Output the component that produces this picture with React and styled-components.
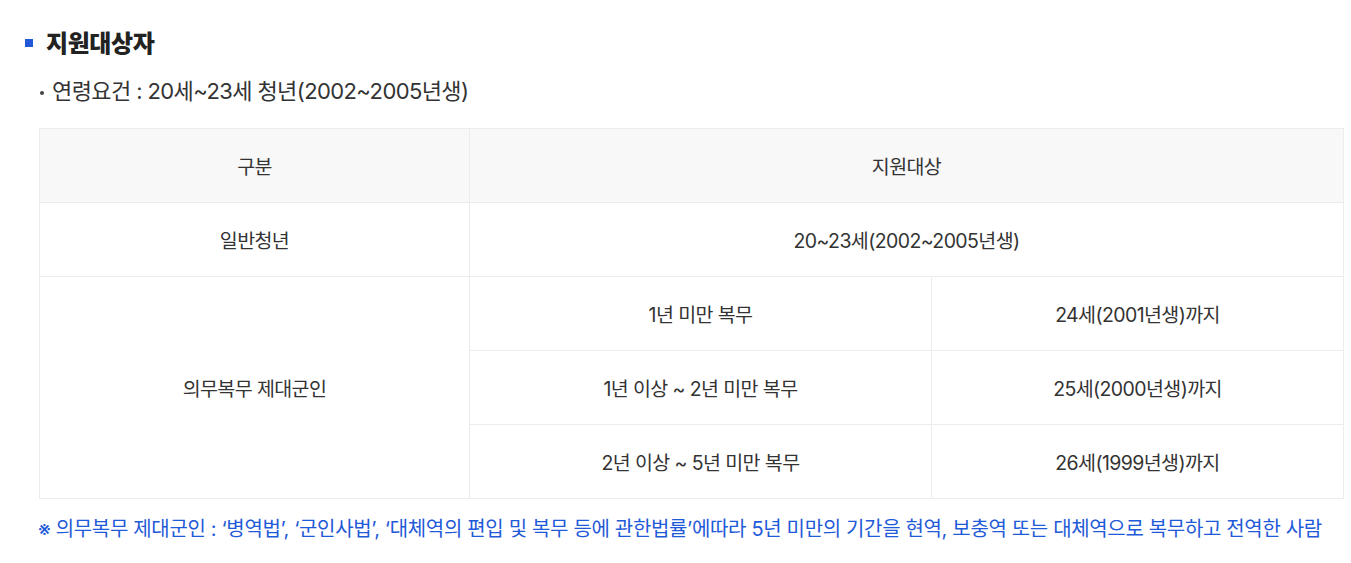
import React from "react";
import styled, { createGlobalStyle } from "styled-components";

const GlobalStyle = createGlobalStyle`
  body {
    margin: 0;
    background: #fff;
    font-family: Inter, "Noto Sans CJK KR", sans-serif;
    color: #333;
  }
`;

const rows = [
  { period: "1년 미만 복무", age: "24세(2001년생)까지" },
  { period: "1년 이상 ~ 2년 미만 복무", age: "25세(2000년생)까지" },
  { period: "2년 이상 ~ 5년 미만 복무", age: "26세(1999년생)까지" },
];

const App = () => {
  return (
    <Page>
      <GlobalStyle />
      <Heading>지원대상자</Heading>
      <Bullet>연령요건 : 20세~23세 청년(2002~2005년생)</Bullet>
      <Table>
        <colgroup>
          <col style={{ width: 430 }} />
          <col style={{ width: 462 }} />
          <col style={{ width: 412 }} />
        </colgroup>
        <thead>
          <tr>
            <Th>구분</Th>
            <Th colSpan={2}>지원대상</Th>
          </tr>
        </thead>
        <tbody>
          <tr>
            <Td>일반청년</Td>
            <Td colSpan={2}>20~23세(2002~2005년생)</Td>
          </tr>
          {rows.map((row, i) => (
            <tr key={row.period}>
              {i === 0 && <Td rowSpan={3}>의무복무 제대군인</Td>}
              <Td>{row.period}</Td>
              <Td>{row.age}</Td>
            </tr>
          ))}
        </tbody>
      </Table>
      <Note>
        ※ 의무복무 제대군인 : ‘병역법’, ‘군인사법’, ‘대체역의 편입 및 복무 등에
        관한법률’에따라 5년 미만의 기간을 현역, 보충역 또는 대체역으로 복무하고
        전역한 사람
      </Note>
    </Page>
  );
};

const Page = styled.div`
  padding: 28px 8px 0 39px;
`;

const Heading = styled.h3`
  position: relative;
  margin: 0 0 0 7px;
  font-size: 24px;
  font-weight: 800;
  color: #222;
  letter-spacing: -0.4px;
  line-height: 32px;
  &::before {
    content: "";
    position: absolute;
    left: -21px;
    top: 11px;
    width: 8px;
    height: 8px;
    background: #2258d8;
  }
`;

const Bullet = styled.p`
  position: relative;
  margin: 16px 0 0 13px;
  font-size: 22px;
  line-height: 30px;
  color: #333;
  letter-spacing: -0.6px;
  &::before {
    content: "";
    position: absolute;
    left: -12px;
    top: 15px;
    width: 4px;
    height: 4px;
    border-radius: 50%;
    background: #444;
  }
`;

const Table = styled.table`
  margin-top: 22px;
  width: 1305px;
  border-collapse: collapse;
  table-layout: fixed;
`;

const Th = styled.th`
  height: 73px;
  padding: 0;
  background: #f8f8f8;
  border: 1px solid #ececec;
  font-size: 19.5px;
  font-weight: 400;
  color: #333;
  letter-spacing: -0.6px;
  text-align: center;
`;

const Td = styled.td`
  height: 73px;
  padding: 0;
  border: 1px solid #ececec;
  font-size: 19.5px;
  color: #333;
  letter-spacing: -0.6px;
  text-align: center;
`;

const Note = styled.p`
  margin: 16px 0 0 -1px;
  font-size: 20px;
  line-height: 28px;
  color: #1f5ad8;
  letter-spacing: -0.34px;
  white-space: nowrap;
`;

export default App;
